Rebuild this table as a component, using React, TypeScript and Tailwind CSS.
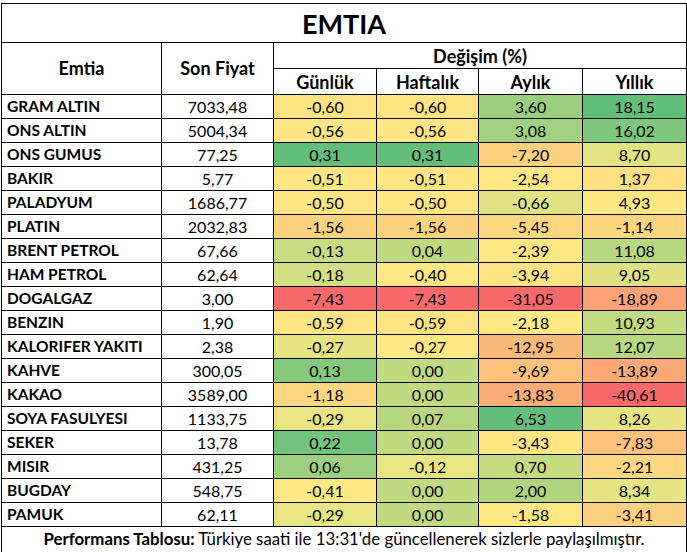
import React from "react";

type Row = { name: string; price: string; cells: [string, string][] };

// value, background colour (Excel colour scale)
const rows: Row[] = [
  { name: "GRAM ALTIN", price: "7033,48", cells: [["-0,60", "bg-[#ffe483]"], ["-0,60", "bg-[#ffe483]"], ["3,60", "bg-[#9bcf7f]"], ["18,15", "bg-[#63be7b]"]] },
  { name: "ONS ALTIN", price: "5004,34", cells: [["-0,56", "bg-[#ffe583]"], ["-0,56", "bg-[#ffe583]"], ["3,08", "bg-[#a2d17f]"], ["16,02", "bg-[#7fc77d]"]] },
  { name: "ONS GUMUS", price: "77,25", cells: [["0,31", "bg-[#63be7b]"], ["0,31", "bg-[#63be7b]"], ["-7,20", "bg-[#fdd17f]"], ["8,70", "bg-[#e2e383]"]] },
  { name: "BAKIR", price: "5,77", cells: [["-0,51", "bg-[#ffe683]"], ["-0,51", "bg-[#ffe683]"], ["-2,54", "bg-[#ffe884]"], ["1,37", "bg-[#fedf81]"]] },
  { name: "PALADYUM", price: "1686,77", cells: [["-0,50", "bg-[#ffe683]"], ["-0,50", "bg-[#ffe683]"], ["-0,66", "bg-[#e0e383]"], ["4,93", "bg-[#fee683]"]] },
  { name: "PLATIN", price: "2032,83", cells: [["-1,56", "bg-[#fdd27f]"], ["-1,56", "bg-[#fdd27f]"], ["-5,45", "bg-[#fed880]"], ["-1,14", "bg-[#fed680]"]] },
  { name: "BRENT PETROL", price: "67,66", cells: [["-0,13", "bg-[#c9dc81]"], ["0,04", "bg-[#beda80]"], ["-2,39", "bg-[#ffe784]"], ["11,08", "bg-[#b8d880]"]] },
  { name: "HAM PETROL", price: "62,64", cells: [["-0,18", "bg-[#d2df82]"], ["-0,40", "bg-[#ffe784]"], ["-3,94", "bg-[#ffe483]"], ["9,05", "bg-[#dfe283]"]] },
  { name: "DOGALGAZ", price: "3,00", cells: [["-7,43", "bg-[#f8696b]"], ["-7,43", "bg-[#f8696b]"], ["-31,05", "bg-[#f8696b]"], ["-18,89", "bg-[#fba276]"]] },
  { name: "BENZIN", price: "1,90", cells: [["-0,59", "bg-[#ffe483]"], ["-0,59", "bg-[#ffe483]"], ["-2,18", "bg-[#ffe984]"], ["10,93", "bg-[#c2da80]"]] },
  { name: "KALORIFER YAKITI", price: "2,38", cells: [["-0,27", "bg-[#e7e483]"], ["-0,27", "bg-[#ffe784]"], ["-12,95", "bg-[#fbb979]"], ["12,07", "bg-[#b7d780]"]] },
  { name: "KAHVE", price: "300,05", cells: [["0,13", "bg-[#86c97d]"], ["0,00", "bg-[#c0da80]"], ["-9,69", "bg-[#fcc27b]"], ["-13,89", "bg-[#fbaa77]"]] },
  { name: "KAKAO", price: "3589,00", cells: [["-1,18", "bg-[#fed880]"], ["0,00", "bg-[#c0da80]"], ["-13,83", "bg-[#fbad77]"], ["-40,61", "bg-[#f8696b]"]] },
  { name: "SOYA FASULYESI", price: "1133,75", cells: [["-0,29", "bg-[#eae583]"], ["0,07", "bg-[#b8d880]"], ["6,53", "bg-[#63be7b]"], ["8,26", "bg-[#e7e583]"]] },
  { name: "SEKER", price: "13,78", cells: [["0,22", "bg-[#74c37c]"], ["0,00", "bg-[#c0da80]"], ["-3,43", "bg-[#ffe483]"], ["-7,83", "bg-[#fcc17c]"]] },
  { name: "MISIR", price: "431,25", cells: [["0,06", "bg-[#9dcf7f]"], ["-0,12", "bg-[#e8e583]"], ["0,70", "bg-[#c5db81]"], ["-2,21", "bg-[#fed880]"]] },
  { name: "BUGDAY", price: "548,75", cells: [["-0,41", "bg-[#ffe784]"], ["0,00", "bg-[#c0da80]"], ["2,00", "bg-[#b0d580]"], ["8,34", "bg-[#e6e483]"]] },
  { name: "PAMUK", price: "62,11", cells: [["-0,29", "bg-[#eae583]"], ["0,00", "bg-[#c0da80]"], ["-1,58", "bg-[#fee883]"], ["-3,41", "bg-[#fdd17f]"]] },
];

export default function App() {
  return (
    <div className="w-[687px] h-[552px] bg-white pt-[3px] pl-px text-black font-['Lato','Liberation_Sans',sans-serif] overflow-hidden">
      <table className="border-collapse table-fixed w-[685px] border border-black">
        <colgroup>
          <col className="w-[160px]" />
          <col className="w-[112px]" />
          <col className="w-[103px]" />
          <col className="w-[102px]" />
          <col className="w-[104px]" />
          <col className="w-[104px]" />
        </colgroup>
        <thead>
          <tr className="h-[39px]">
            <th colSpan={6} className="border border-black text-[27px] font-bold leading-none">
              EMTIA
            </th>
          </tr>
          <tr className="h-[26px]">
            <th rowSpan={2} className="border border-black text-[18px] font-bold">
              Emtia
            </th>
            <th rowSpan={2} className="border border-black text-[18px] font-bold">
              Son Fiyat
            </th>
            <th colSpan={4} className="border border-black text-[18px] font-bold leading-none">
              Değişim (%)
            </th>
          </tr>
          <tr className="h-[26px]">
            <th className="border border-black text-[18px] font-bold leading-none">Günlük</th>
            <th className="border border-black text-[18px] font-bold leading-none">Haftalık</th>
            <th className="border border-black text-[18px] font-bold leading-none">Aylık</th>
            <th className="border border-black text-[18px] font-bold leading-none">Yıllık</th>
          </tr>
        </thead>
        <tbody className="text-[16px]">
          {rows.map((r) => (
            <tr key={r.name} className="h-[24px]">
              <td className="border border-black pl-[5px] pt-px text-[15.5px] font-bold leading-none whitespace-nowrap">{r.name}</td>
              <td className="border border-black pt-px text-center leading-none">{r.price}</td>
              {r.cells.map(([v, bg], i) => (
                <td key={i} className={`border border-black pt-px text-center leading-none ${bg}`}>
                  {v}
                </td>
              ))}
            </tr>
          ))}
          <tr className="h-[26px]">
            <td colSpan={6} className="border border-black text-center text-[16.8px] leading-none whitespace-nowrap">
              <span className="font-bold">Performans Tablosu:</span> Türkiye saati ile 13:31'de güncellenerek sizlerle paylaşılmıştır.
            </td>
          </tr>
        </tbody>
      </table>
    </div>
  );
}
